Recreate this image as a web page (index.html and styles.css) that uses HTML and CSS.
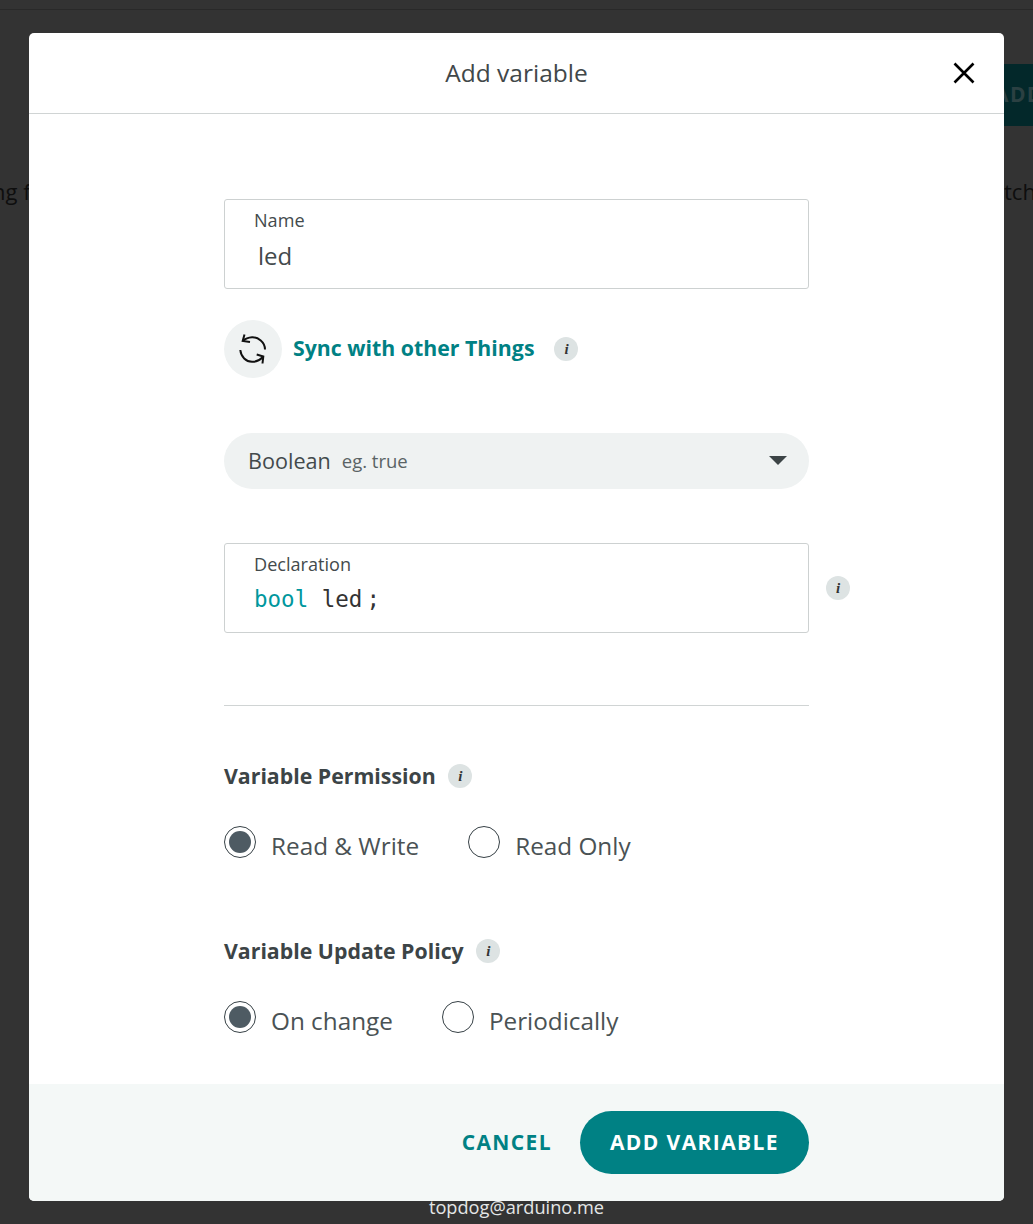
FILE: index.html
```html
<!DOCTYPE html>
<html lang="en">
<head>
  <meta charset="UTF-8">
  <meta name="viewport" content="width=device-width,initial-scale=1.0">
  <title>Add variable</title>
  <link rel="stylesheet" href="styles.css">
</head>
<body>

<!-- Page behind the dialog -->
<div class="top-line"></div>
<div class="behind-btn">ADD</div>
<div class="behind-text left">ng f</div>
<div class="behind-text right">tch</div>
<div class="behind-user">topdog@arduino.me</div>

<div class="modal">
  <header class="modal-head">
    <h1>Add variable</h1>
    <svg class="close" width="22" height="22" viewBox="0 0 22 22"><path d="M1.5 1.5 20.5 20.5M20.5 1.5 1.5 20.5" stroke="#000" stroke-width="2.6" fill="none"/></svg>
  </header>

  <div class="modal-body">
    <div class="field">
      <label>Name</label>
      <div class="name-value">led</div>
    </div>

    <div class="sync">
      <span class="sync-circle">
        <svg width="30" height="32" viewBox="0 0 30 32" fill="none" stroke="#111" stroke-width="2">
          <path d="M27 16.5C27 9 20 4 14 4.3 10.5 4.5 7.500 5.500 5 8"/>
          <path d="M2.300 17C3 24 8 28.500 14 28.800 18.500 29 22 27 25 24"/>
          <path d="M6.500 1.500 4.700 8 12 9"/>
          <path d="M24.500 30.500 25.300 23.500 18.700 21.500"/>
        </svg>
      </span>
      <span class="sync-label">Sync with other Things</span>
      <span class="info">i</span>
    </div>

    <div class="select">
      <span class="select-value">Boolean</span>
      <span class="select-hint">eg. true</span>
      <span class="caret"></span>
    </div>

    <div class="decl-row">
      <div class="field">
        <label>Declaration</label>
        <div class="code"><span class="kw">bool</span> led<span class="semi">;</span></div>
      </div>
      <span class="info">i</span>
    </div>

    <hr class="divider">

    <div class="group-title">Variable Permission <span class="info">i</span></div>
    <div class="radios">
      <div class="radio checked"><span class="dot"></span>Read &amp; Write</div>
      <div class="radio"><span class="dot"></span>Read Only</div>
    </div>

    <div class="group-title second">Variable Update Policy <span class="info">i</span></div>
    <div class="radios">
      <div class="radio checked"><span class="dot"></span>On change</div>
      <div class="radio"><span class="dot"></span>Periodically</div>
    </div>
  </div>

  <footer class="modal-foot">
    <span class="cancel">CANCEL</span>
    <span class="primary">ADD VARIABLE</span>
  </footer>
</div>

</body>
</html>
```

FILE: styles.css
```css
body { margin:0; height:1224px; overflow:hidden; background:#333; color:#3c4446;
  font-family:"Open Sans", sans-serif; position:relative; }

/* Behind the dialog */
.top-line { position:absolute; top:9px; left:0; right:0; height:1px; background:#292929; }
.behind-btn { position:absolute; left:1004px; top:64px; width:29px; height:62px; background:#03282a; overflow:hidden;
  color:#2b4042; font-weight:700; font-size:21px; line-height:60px; letter-spacing:1.4px; text-indent:-10px; white-space:nowrap; }
.behind-text { position:absolute; top:176px; font-size:22px; color:#0e0e0e; }
.behind-text.left { left:-8px; }
.behind-text.right { left:1004px; }
.behind-user { position:absolute; top:1195px; left:0; right:0; text-align:center; color:#e4e6e6; font-size:18.2px; }

/* Dialog */
.modal { position:absolute; left:29px; top:33px; width:975px; height:1168px; background:#fff;
  border-radius:5px; display:flex; flex-direction:column; overflow:hidden; }
.modal-head { height:80px; border-bottom:1px solid #d0d4d4; display:flex; align-items:center;
  justify-content:center; position:relative; flex:none; }
.modal-head h1 { margin:-2px 0 0; font-size:24.5px; font-weight:400; color:#414749; }
.close { position:absolute; right:29px; top:29px; }

.modal-body { flex:1; padding:85px 195px 0; }

.field { width:585px; height:90px; box-sizing:border-box; border:1px solid #cdd1d1; border-radius:3px;
  padding:8px 29px 0; }
.field label { display:block; font-size:18.1px; line-height:24px; color:#434a4c; }
.name-value { font-size:24px; line-height:33px; margin:7px 0 0 4px; color:#434a4c; }

.sync { display:flex; align-items:center; margin-top:31px; height:58px; }
.sync-circle { width:58px; height:58px; border-radius:50%; background:#eff2f2; display:flex;
  align-items:center; justify-content:center; }
.sync-label { margin:-3px 0 0 11px; font-size:21.3px; font-weight:700; color:#008184; }
.sync .info { margin-left:20px; }

.info { display:inline-flex; width:24px; height:24px; border-radius:50%; background:#dde3e3; color:#333;
  font-family:"Liberation Serif", serif; font-style:italic; font-weight:700; font-size:15px;
  align-items:center; justify-content:center; vertical-align:middle; flex:none; }

.select { margin-top:55px; height:56px; border-radius:28px; background:#eff2f2; display:flex;
  align-items:center; padding:0 22px 0 24px; }
.select-value { font-size:21.6px; color:#434a4c; margin-top:-2px; }
.select-hint { margin:-2px 0 0 11px; font-size:18.5px; color:#5a6365; }
.caret { margin-left:auto; border-left:9px solid transparent; border-right:9px solid transparent;
  border-top:9px solid #3c4446; margin-top:-2px; }

.decl-row { display:flex; align-items:center; margin-top:54px; width:626px; gap:17px; }
.code { font-family:"DejaVu Sans Mono", monospace; font-size:22.5px; line-height:30px; margin-top:8px; color:#333; }
.code .kw { color:#00979d; }
.code .semi { margin-left:4px; }

.divider { border:0; border-top:1px solid #d0d4d4; margin:72px 0 0; width:585px; }

.group-title { margin-top:56px; font-size:21.3px; font-weight:700; line-height:28px; color:#3c4446;
  display:flex; align-items:center; gap:12.5px; }
.group-title.second { margin-top:75px; }

.radios { display:flex; gap:49px; margin-top:40px; }
.radio { display:flex; align-items:center; font-size:24.3px; line-height:32px; color:#4a5254; }
.dot { width:32px; height:32px; box-sizing:border-box; border:1.5px solid #374146; border-radius:50%;
  background:#fff; margin-right:15px; position:relative; transform:translateY(-4px); }
.radio.checked .dot::after { content:""; position:absolute; inset:4px; border-radius:50%; background:#4e5b63; }

.modal-foot { height:117px; flex:none; background:#f4f8f7; display:flex; align-items:center;
  justify-content:flex-end; padding-right:195px; box-sizing:border-box; }
.cancel { font-size:21px; font-weight:700; letter-spacing:1.4px; color:#008184; margin:-2px 28px 0 0; }
.primary { width:229px; height:63px; border-radius:32px; background:#008184; color:#fff; font-size:21px;
  font-weight:700; letter-spacing:1.4px; display:flex; align-items:center; justify-content:center; padding-bottom:2px; box-sizing:border-box; }
```
